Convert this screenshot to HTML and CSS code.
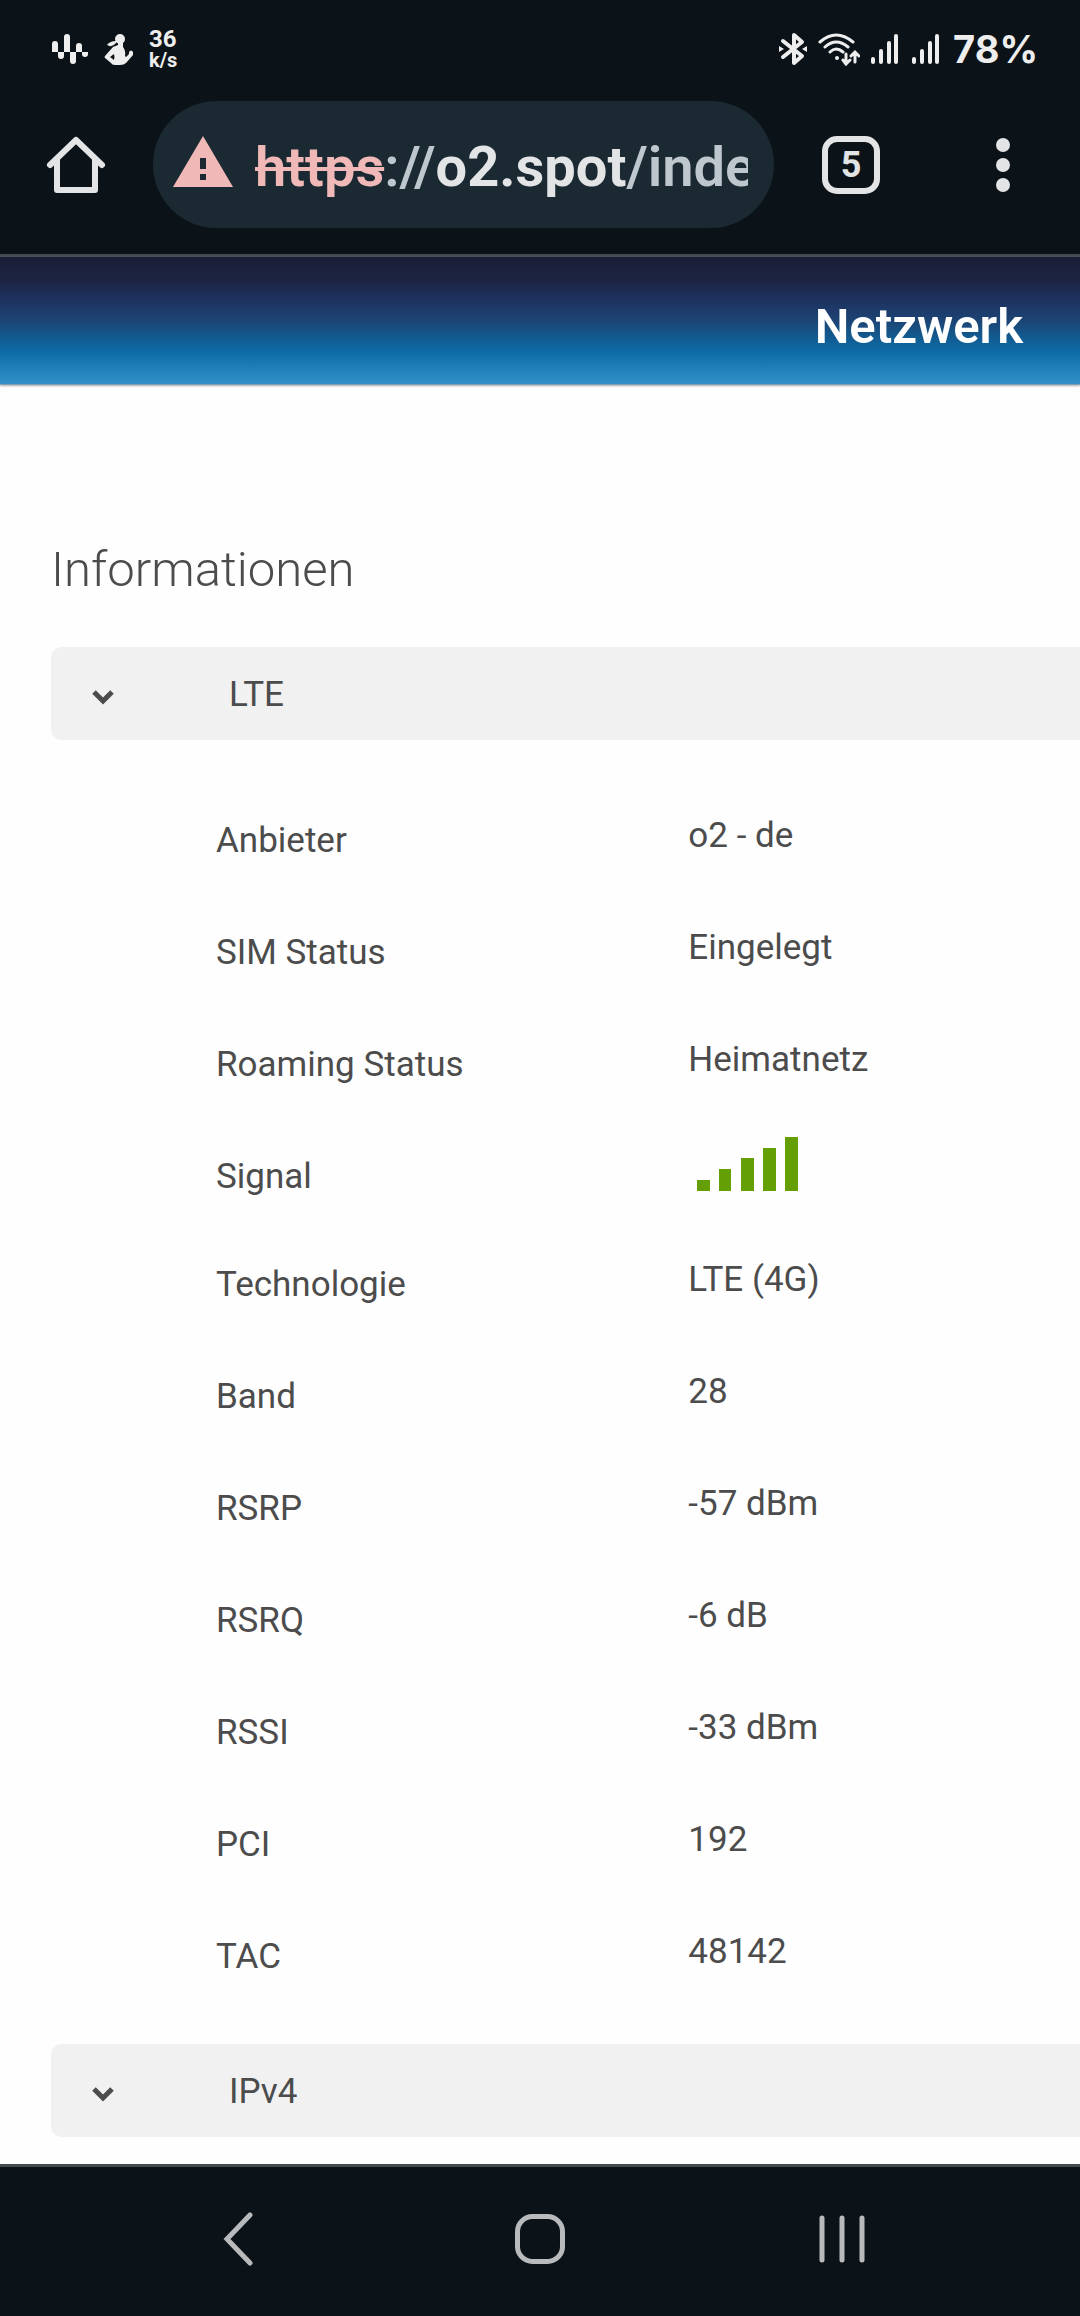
FILE: index.html
```html
<!DOCTYPE html>
<html lang="de">
<head>
    <meta charset="UTF-8">
    <meta name="viewport" content="width=device-width, initial-scale=1.0">
    <title>Netzwerk</title>
    <link rel="stylesheet" href="styles.css">
</head>
<body>

    <div class="status-bar">
        <div class="status-left">
            <svg class="icon-wave" width="38" height="34" viewBox="0 0 38 34" fill="#eeeeee">
                <path d="M1 20V12a3 3 0 0 1 6 0v8zM13 20V5a3 3 0 0 1 6 0v15zM25 20v-6a3 3 0 0 1 6 0v6zM7 20h6v4a3 3 0 0 1-6 0zM19 20h6v9a3 3 0 0 1-6 0zM31 20h6v2a3 3 0 0 1-6 0z"/>
            </svg>
            <svg class="icon-person" width="30" height="34" viewBox="0 0 30 34" fill="#eeeeee">
                <circle cx="16" cy="7" r="5"/>
                <path d="M12 9Q6 9 3 13Q8 16 12 11z"/>
                <path fill-rule="evenodd" d="M14 11h5v4q3 4 2 9l1 1l3-3v-2q2-3 4 0v3l-7 8q-2 2-6 2h-5q-3 0-4-2l-6-5q-1-1 0-2l8-9l5-2zM10 22l-4 3l4 3q1-3 0-6z"/>
            </svg>
            <div class="speed"><span>36</span><span class="unit">k/s</span></div>
        </div>
        <div class="status-right">
            <svg class="icon-bt" width="28" height="34" viewBox="0 0 28 34" fill="none" stroke="#eeeeee" stroke-width="4" stroke-linejoin="round" stroke-linecap="round">
                <path d="M4 9L23 24L15 31V3L23 10L4 25"/>
                <path stroke="none" fill="#eeeeee" d="M0 14l5 3l-5 3zM28 14l-5 3l5 3z"/>
            </svg>
            <svg class="icon-wifi" width="42" height="34" viewBox="0 0 42 34" fill="none" stroke="#eeeeee" stroke-width="3" stroke-linecap="round">
                <path d="M2 10Q18-4 35 10M7 15Q18 5 30 15M12 20Q18 14 25 20"/>
                <circle cx="19" cy="26" r="2" fill="#eeeeee" stroke="none"/>
                <path d="M28 22v9M25 28l3 4l4-4M37 30v-9M33 24l4-4l4 4"/>
            </svg>
            <svg class="icon-bars" width="30" height="32" viewBox="0 0 30 32" stroke="#eeeeee" stroke-width="4" stroke-linecap="round">
                <path d="M2 26v3M10 18v11M18 10v19M25 3v26"/>
            </svg>
            <svg class="icon-bars" width="30" height="32" viewBox="0 0 30 32" stroke="#eeeeee" stroke-width="4" stroke-linecap="round">
                <path d="M2 26v3M10 18v11M18 10v19M25 3v26"/>
            </svg>
            <span class="battery">78%</span>
        </div>
    </div>

    <div class="toolbar">
        <button class="tool-btn" aria-label="Startseite">
            <svg width="60" height="60" viewBox="0 0 60 60" fill="none" stroke="#e2e4e6" stroke-width="6" stroke-linejoin="round" stroke-linecap="round">
                <path d="M4 30L30 5L56 30M11 25V55H49V25"/>
            </svg>
        </button>
        <div class="omnibox">
            <svg class="icon-warn" width="60" height="51" viewBox="0 0 60 51">
                <path fill="#f0b9b7" d="M30 0L60 51H0z"/>
                <path fill="#1b2932" d="M27 22h6v11h-6zM27 38h6v6h-6z"/>
            </svg>
            <a class="url" href="https://o2.spot/index"><s>https</s>://<b>o2.spot</b>/index</a>
        </div>
        <button class="tabs-btn" aria-label="Tabs">5</button>
        <button class="tool-btn menu-btn" aria-label="Menü">
            <svg width="14" height="54" viewBox="0 0 14 54" fill="#e2e4e6">
                <circle cx="7" cy="7" r="7"/>
                <circle cx="7" cy="27" r="7"/>
                <circle cx="7" cy="47" r="7"/>
            </svg>
        </button>
    </div>

    <header class="header">
        <h1>Netzwerk</h1>
    </header>

    <main class="content">
        <h2>Informationen</h2>

        <button class="section" aria-expanded="true">
            <svg class="chevron" width="24" height="16" viewBox="0 0 24 16" fill="none" stroke="#4c4c4c" stroke-width="5">
                <path d="M3 3L12 12L21 3"/>
            </svg>
            LTE
        </button>

        <table class="info">
            <tr><th>Anbieter</th><td>o2 - de</td></tr>
            <tr><th>SIM Status</th><td>Eingelegt</td></tr>
            <tr><th>Roaming Status</th><td>Heimatnetz</td></tr>
            <tr class="signal-row">
                <th>Signal</th>
                <td>
                    <svg class="signal" width="112" height="56" viewBox="0 0 112 56" fill="#64a005">
                        <path d="M9 44h13v11h-13zM31 33h12v22h-12zM53 22h13v33h-13zM75 12h13v43h-13zM97 1h13v54h-13z"/>
                    </svg>
                </td>
            </tr>
            <tr><th>Technologie</th><td>LTE (4G)</td></tr>
            <tr><th>Band</th><td>28</td></tr>
            <tr><th>RSRP</th><td>-57 dBm</td></tr>
            <tr><th>RSRQ</th><td>-6 dB</td></tr>
            <tr><th>RSSI</th><td>-33 dBm</td></tr>
            <tr><th>PCI</th><td>192</td></tr>
            <tr><th>TAC</th><td>48142</td></tr>
        </table>

        <button class="section" aria-expanded="false">
            <svg class="chevron" width="24" height="16" viewBox="0 0 24 16" fill="none" stroke="#4c4c4c" stroke-width="5">
                <path d="M3 3L12 12L21 3"/>
            </svg>
            IPv4
        </button>
    </main>

    <nav class="nav-bar">
        <button aria-label="Zurück">
            <svg width="30" height="54" viewBox="0 0 30 54" fill="none" stroke="#b9babc" stroke-width="5" stroke-linecap="round">
                <path d="M27 3L4 27L27 51"/>
            </svg>
        </button>
        <button aria-label="Home">
            <svg width="50" height="50" viewBox="0 0 50 50" fill="none" stroke="#b9babc" stroke-width="5">
                <rect x="2.5" y="2.5" width="45" height="45" rx="15"/>
            </svg>
        </button>
        <button aria-label="Letzte Apps">
            <svg width="46" height="50" viewBox="0 0 46 50" stroke="#b9babc" stroke-width="5" stroke-linecap="round">
                <path d="M3 4v42M23 4v42M43 4v42"/>
            </svg>
        </button>
    </nav>

</body>
</html>
```

FILE: styles.css
```css
* {
    box-sizing: border-box;
}

body {
    font-family: Roboto, 'Liberation Sans', sans-serif;
    background-color: #fefefe;
    color: #4c4c4c;
    margin: 0;
    min-height: 100vh;
    display: flex;
    flex-direction: column;
}

button {
    font-family: inherit;
    color: inherit;
    background: none;
    border: none;
    padding: 0;
    cursor: pointer;
}

svg {
    display: block;
    flex-shrink: 0;
}

/* status bar */

.status-bar {
    display: flex;
    justify-content: space-between;
    align-items: center;
    height: 97px;
    padding: 0 42px 0 51px;
    background-color: #0c1318;
    color: #eeeeee;
}

.status-left,
.status-right {
    display: flex;
    align-items: center;
}

.status-left {
    gap: 15px;
}

.status-right {
    gap: 11px;
}

.speed {
    display: flex;
    flex-direction: column;
    font-size: 24px;
    font-weight: 700;
    line-height: 22px;
}

.speed .unit {
    font-size: 20px;
    line-height: 20px;
}

.battery {
    font-family: Inter, Roboto, sans-serif;
    font-size: 38px;
    font-weight: 700;
}

/* browser toolbar */

.toolbar {
    display: flex;
    align-items: center;
    height: 160px;
    padding: 0 70px 22px 46px;
    background-color: #0c1318;
    border-bottom: 3px solid #434a52;
}

.omnibox {
    flex: 1;
    min-width: 0;
    display: flex;
    align-items: center;
    gap: 22px;
    height: 127px;
    margin: 0 48px 0 47px;
    padding: 0 26px 0 20px;
    border-radius: 64px;
    background-color: #1b2932;
}

.icon-warn {
    margin-bottom: 6px;
}

.url {
    flex: 1;
    min-width: 0;
    padding-top: 4px;
    overflow: hidden;
    white-space: nowrap;
    font-size: 56px;
    font-weight: 600;
    line-height: 72px;
    color: #bfc7ce;
    text-decoration: none;
}

.url s {
    color: #f0b9b7;
    text-decoration-thickness: 4px;
}

.url b {
    font-weight: 700;
    color: #e2e4e6;
}

.tabs-btn {
    width: 58px;
    height: 58px;
    border: 6px solid #e2e4e6;
    border-radius: 15px;
    font-size: 36px;
    font-weight: 700;
    line-height: 44px;
    color: #e2e4e6;
}

.menu-btn {
    margin-left: 116px;
}

/* page header */

.header {
    display: flex;
    align-items: center;
    justify-content: flex-end;
    height: 128px;
    padding: 12px 57px 0 0;
    background: linear-gradient(#1c1d35 0%, #1c2443 18%, #1e305d 32%, #1c4474 50%, #105f96 66%, #0f6ea8 76%, #2384bd 91%, #348fc5 100%);
    border-bottom: 1px solid #7f9fb2;
    box-shadow: 0 1px 2px #aaaaaa;
}

h1 {
    margin: 0;
    font-size: 49px;
    font-weight: 600;
    line-height: 60px;
    color: #ffffff;
}

/* content */

.content {
    flex: 1;
    padding: 155px 0 27px 51px;
}

h2 {
    margin: 0 0 47px;
    font-size: 49px;
    font-weight: 300;
    line-height: 60px;
}

.section {
    display: flex;
    align-items: center;
    gap: 114px;
    width: 100%;
    height: 93px;
    padding: 2px 40px 0;
    border-radius: 10px 0 0 10px;
    background-color: #f1f1f1;
    font-size: 35px;
    text-align: left;
}

.chevron {
    margin-top: 4px;
}

.info {
    width: 100%;
    margin: 38px 0;
    border-collapse: collapse;
    table-layout: fixed;
    font-size: 35px;
    line-height: 40px;
}

.info tr {
    height: 112px;
}

.info .signal-row {
    height: 108px;
}

.info th {
    width: 46%;
    padding: 43px 0 0 165px;
    font-weight: 400;
    text-align: left;
    vertical-align: top;
    white-space: nowrap;
}

.info td {
    padding: 38px 0 0 164px;
    vertical-align: top;
}

.info .signal-row td {
    padding-top: 22px;
}

/* android navigation */

.nav-bar {
    display: grid;
    grid-template-columns: repeat(3, 1fr);
    height: 153px;
    padding: 0 87px 6px;
    background-color: #0c1318;
    border-top: 3px solid #434a4e;
}

.nav-bar button {
    display: flex;
    align-items: center;
    justify-content: center;
}
```
